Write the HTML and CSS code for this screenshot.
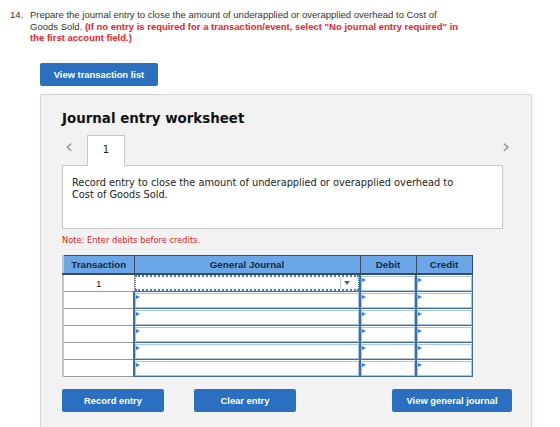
FILE: index.html
```html
<!DOCTYPE html>
<html lang="en">
<head>
    <meta charset="UTF-8">
    <title>Journal entry worksheet</title>
    <link rel="stylesheet" href="styles.css">
</head>
<body>
    <div class="question">
        <span class="q-num">14.</span>
        <p class="q-text">Prepare the journal entry to close the amount of underapplied or overapplied overhead to Cost of<br>Goods Sold. <b class="warn">(If no entry is required for a transaction/event, select "No journal entry required" in</b><br><b class="warn">the first account field.)</b></p>
    </div>

    <button class="btn btn-list">View transaction list</button>

    <div class="worksheet">
        <h2>Journal entry worksheet</h2>

        <div class="tabs">
            <span class="arrow">&lsaquo;</span>
            <div class="tab">1</div>
            <span class="arrow arrow-next">&rsaquo;</span>
        </div>

        <div class="entry-box">Record entry to close the amount of underapplied or overapplied overhead to Cost of Goods Sold.</div>

        <p class="note">Note: Enter debits before credits.</p>

        <table class="journal">
            <colgroup>
                <col class="c-trans">
                <col class="c-gj">
                <col class="c-amt">
                <col class="c-amt">
            </colgroup>
            <thead>
                <tr>
                    <th>Transaction</th>
                    <th>General Journal</th>
                    <th>Debit</th>
                    <th>Credit</th>
                </tr>
            </thead>
            <tbody>
                <tr>
                    <td class="trans">1</td>
                    <td class="gj-focus"><div class="select"><span class="drop"></span></div></td>
                    <td class="inp"><div class="field"></div></td>
                    <td class="inp"><div class="field"></div></td>
                </tr>
                <tr>
                    <td class="trans"></td>
                    <td class="inp"><div class="field"></div></td>
                    <td class="inp"><div class="field"></div></td>
                    <td class="inp"><div class="field"></div></td>
                </tr>
                <tr>
                    <td class="trans"></td>
                    <td class="inp"><div class="field"></div></td>
                    <td class="inp"><div class="field"></div></td>
                    <td class="inp"><div class="field"></div></td>
                </tr>
                <tr>
                    <td class="trans"></td>
                    <td class="inp"><div class="field"></div></td>
                    <td class="inp"><div class="field"></div></td>
                    <td class="inp"><div class="field"></div></td>
                </tr>
                <tr>
                    <td class="trans"></td>
                    <td class="inp"><div class="field"></div></td>
                    <td class="inp"><div class="field"></div></td>
                    <td class="inp"><div class="field"></div></td>
                </tr>
                <tr>
                    <td class="trans"></td>
                    <td class="inp"><div class="field"></div></td>
                    <td class="inp"><div class="field"></div></td>
                    <td class="inp"><div class="field"></div></td>
                </tr>
            </tbody>
        </table>

        <div class="actions">
            <button class="btn btn-record">Record entry</button>
            <button class="btn btn-clear">Clear entry</button>
            <button class="btn btn-view">View general journal</button>
        </div>
    </div>
</body>
</html>
```

FILE: styles.css
```css
* {
    margin: 0;
    padding: 0;
    box-sizing: border-box;
}

body {
    font-family: 'Liberation Sans', Arial, sans-serif;
    background: #fff;
    color: #222;
    overflow: hidden;
}

.question {
    display: flex;
    padding: 9px 0 0 10px;
    font-size: 9.5px;
    line-height: 11.5px;
    color: #333;
}

.q-num {
    width: 20px;
    flex-shrink: 0;
}

.q-text {
    width: 440px;
    white-space: nowrap;
}

.warn {
    color: #ee1c25;
}

.btn {
    display: block;
    background: #2a6fc0;
    color: #fff;
    border: none;
    border-radius: 2px;
    font-family: 'Liberation Sans', Arial, sans-serif;
    font-weight: bold;
    font-size: 9.4px;
    height: 23px;
    cursor: pointer;
}

.btn-list {
    margin: 19px 0 0 40px;
    width: 118px;
}

.worksheet {
    margin: 8px 0 0 40px;
    width: 492px;
    height: 340px;
    background: #f2f2f2;
    border: 1px solid #d6d6d6;
    padding: 16px 19px 0 21px;
    box-shadow: 2px 0 6px rgba(0, 0, 0, 0.06);
}

h2 {
    font-family: 'DejaVu Sans', Verdana, sans-serif;
    font-size: 13.4px;
    font-weight: bold;
    color: #111;
    height: 24px;
}

.tabs {
    display: flex;
    align-items: center;
    height: 30px;
}

.arrow {
    font-family: 'DejaVu Sans', Verdana, sans-serif;
    font-size: 20px;
    color: #9a9a9a;
    width: 25px;
    padding-left: 3px;
    line-height: 20px;
    margin-bottom: 8px;
}

.arrow-next {
    margin-left: auto;
    width: 10px;
    padding-left: 0;
}

.tab {
    width: 38px;
    height: 31px;
    align-self: flex-start;
    background: #fff;
    border: 1px solid #c8c8c8;
    border-bottom: none;
    text-align: center;
    font-family: 'DejaVu Sans', Verdana, sans-serif;
    font-size: 10px;
    color: #222;
    padding-top: 8px;
    position: relative;
    z-index: 1;
}

.entry-box {
    width: 441px;
    height: 64px;
    background: #fff;
    border: 1px solid #c8c8c8;
    padding: 11px 45px 0 9px;
    font-family: 'DejaVu Sans', Verdana, sans-serif;
    font-size: 9.8px;
    line-height: 12.7px;
    color: #222;
}

.note {
    font-family: 'DejaVu Sans', Verdana, sans-serif;
    font-size: 8.3px;
    color: #d8232a;
    margin-top: 6px;
    height: 20px;
}

.journal {
    border-collapse: collapse;
    table-layout: fixed;
    width: 409px;
    border-left: 2px solid #c4c4c4;
    color: #222;
}

.c-trans { width: 71px; }
.c-gj { width: 226px; }
.c-amt { width: 56px; }

.journal th {
    background: #6aa6e8;
    color: #1d2a38;
    font-size: 9.8px;
    font-weight: bold;
    height: 19px;
    border: 1px solid #3c4b5b;
    border-bottom: 2px solid #3c4b5b;
    border-left-color: #6aa6e8;
}

.journal th + th {
    border-left: 1px solid #34435a;
}

.journal td {
    height: 17px;
    padding: 0;
    background: #fff;
}

.journal td.trans {
    border: 1px solid #9a9a9a;
    text-align: center;
    font-size: 9.8px;
    color: #222;
}

.journal td.inp {
    border: 1px solid #3d6ea8;
    border-left: 2px solid #3d6ea8;
}

.field {
    position: relative;
    height: 15px;
    border: 1px solid #a9c4e4;
}

.field::before {
    content: '';
    position: absolute;
    left: 0;
    top: 1px;
    border-left: 4px solid #2c7fe0;
    border-top: 2px solid transparent;
    border-bottom: 2px solid transparent;
}

.journal td.gj-focus {
    border: 1px solid #9a9a9a;
    border-bottom: 1px solid #3d6ea8;
}

.select {
    position: relative;
    height: 16px;
    border: 1px dotted #3a7fd6;
    border-width: 2px 1px;
}

.drop {
    position: absolute;
    right: 5px;
    top: 0;
    width: 13px;
    height: 12px;
    border-left: 1px solid #b9c9dd;
}

.drop::after {
    content: '';
    position: absolute;
    left: 3px;
    top: 4px;
    border-top: 4px solid #3c6fb0;
    border-left: 3px solid transparent;
    border-right: 3px solid transparent;
}

.actions {
    display: flex;
    gap: 30px;
    margin-top: 12px;
}

.btn-record,
.btn-clear {
    width: 102px;
}

.btn-view {
    width: 120px;
    margin-left: auto;
}
```
